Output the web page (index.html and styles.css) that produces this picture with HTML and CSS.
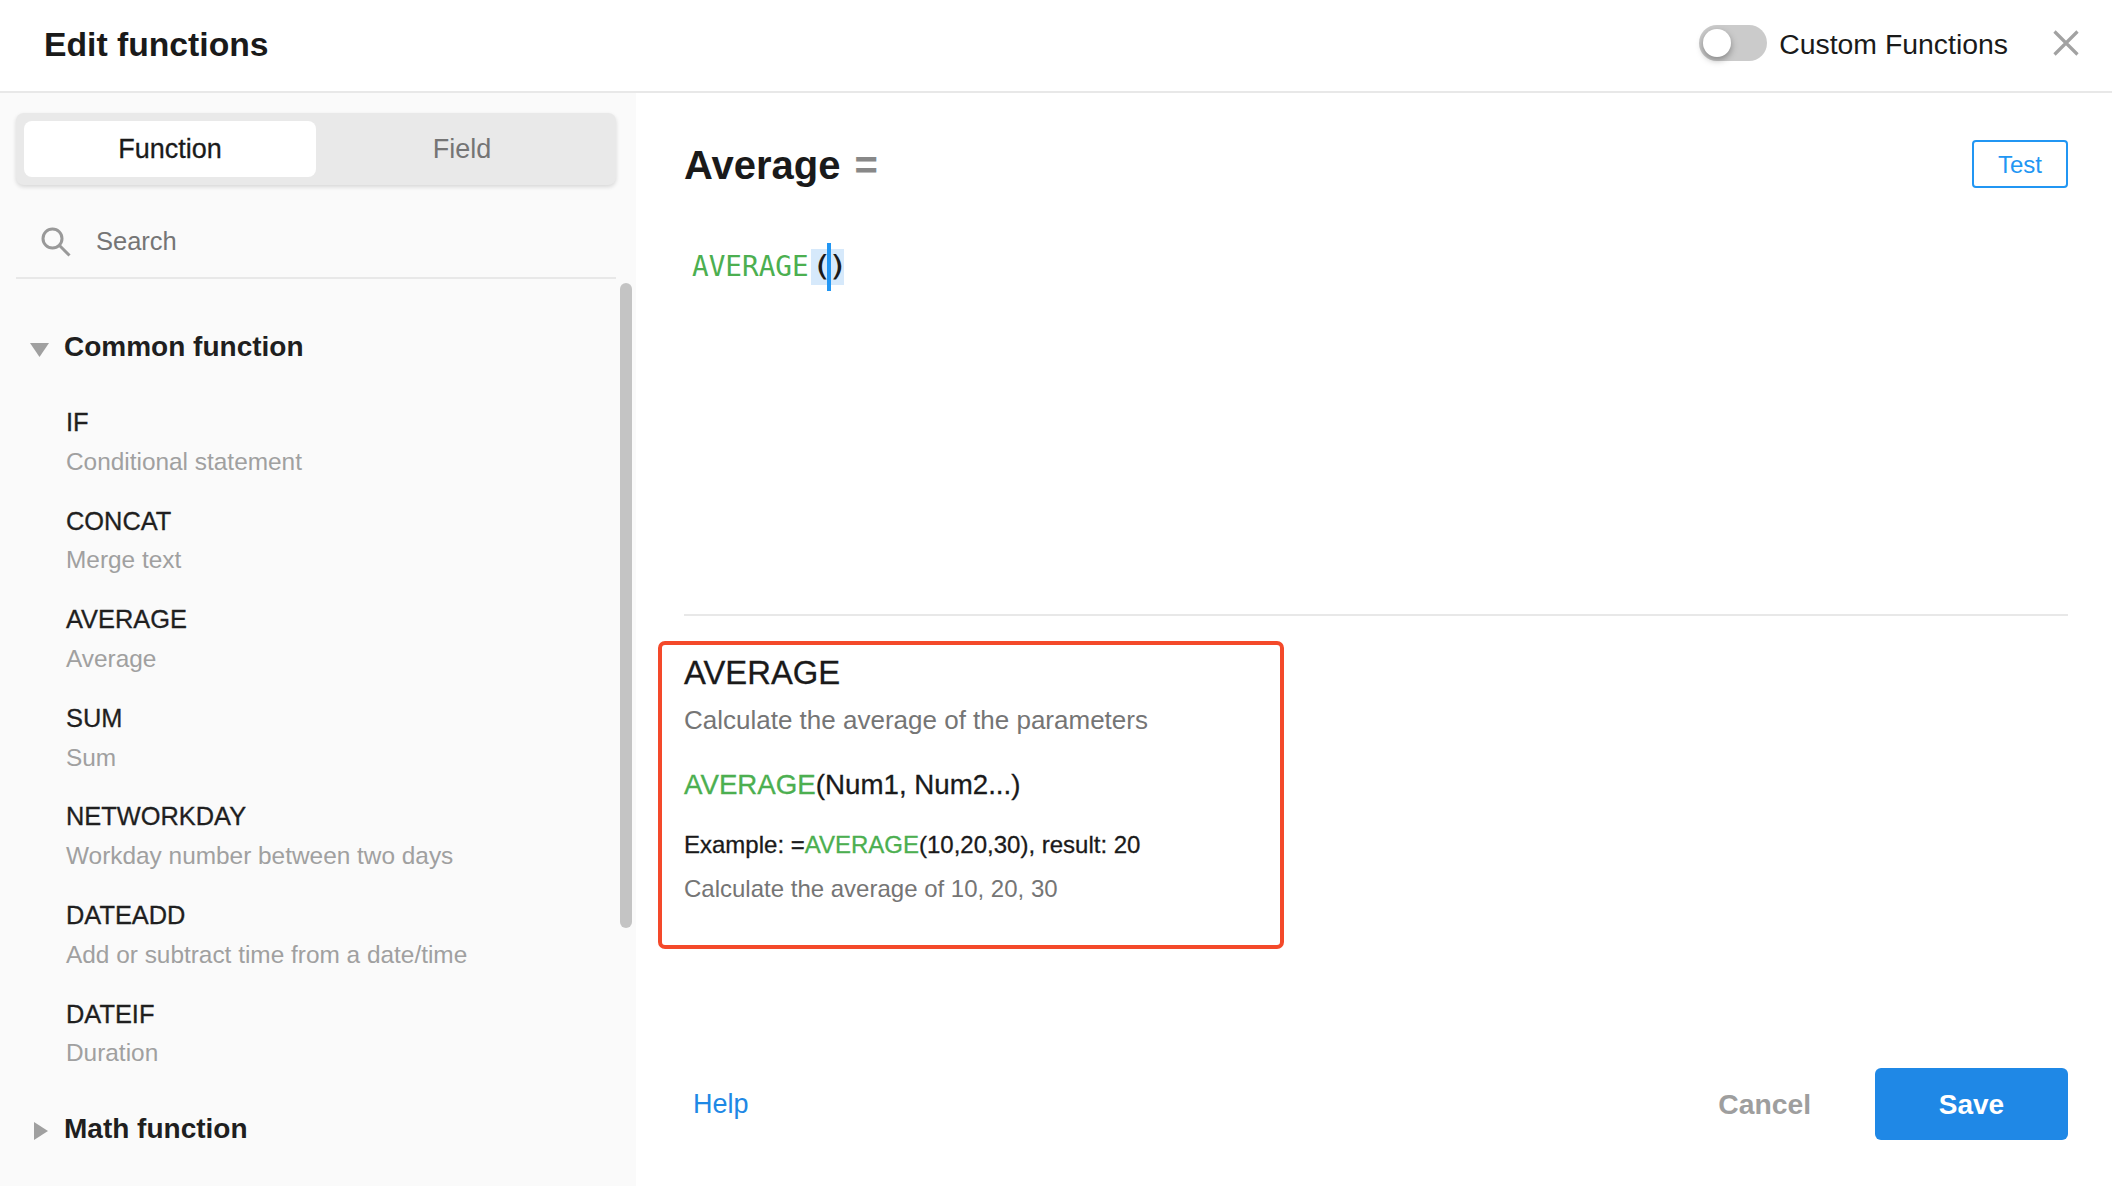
FILE: index.html
```html
<!DOCTYPE html>
<html lang="en">
<head>
<meta charset="utf-8">
<title>Edit functions</title>
<link rel="stylesheet" href="styles.css">
</head>
<body>
<div class="dialog">
  <header class="topbar">
    <h1 class="title">Edit functions</h1>
    <div class="top-actions">
      <span class="toggle"><span class="knob"></span></span>
      <span class="toggle-label">Custom Functions</span>
      <svg class="close" viewBox="0 0 26 26" aria-hidden="true"><path d="M1.5 1.5 24.5 24.5M24.5 1.5 1.5 24.5"/></svg>
    </div>
  </header>
  <div class="body">
    <aside class="sidebar">
      <div class="tabs">
        <div class="tab active">Function</div>
        <div class="tab">Field</div>
      </div>
      <div class="search">
        <svg class="search-icon" viewBox="0 0 30 30" aria-hidden="true"><circle cx="11.5" cy="11.5" r="9.5"/><path d="M18.5 18.5 28.5 28.5"/></svg>
        <span>Search</span>
      </div>
      <div class="scrollbar"></div>
      <div class="group-head first">
        <svg class="caret-down" viewBox="0 0 19 14" aria-hidden="true"><path d="M0 0H19L9.5 14Z"/></svg>
        <span>Common function</span>
      </div>
      <ul class="fn-list">
        <li><div class="fn-name">IF</div><div class="fn-desc">Conditional statement</div></li>
        <li><div class="fn-name">CONCAT</div><div class="fn-desc">Merge text</div></li>
        <li><div class="fn-name">AVERAGE</div><div class="fn-desc">Average</div></li>
        <li><div class="fn-name">SUM</div><div class="fn-desc">Sum</div></li>
        <li><div class="fn-name">NETWORKDAY</div><div class="fn-desc">Workday number between two days</div></li>
        <li><div class="fn-name">DATEADD</div><div class="fn-desc">Add or subtract time from a date/time</div></li>
        <li><div class="fn-name">DATEIF</div><div class="fn-desc">Duration</div></li>
      </ul>
      <div class="group-head">
        <svg class="caret-right" viewBox="0 0 14 18" aria-hidden="true"><path d="M0 0 14 9 0 18Z"/></svg>
        <span>Math function</span>
      </div>
    </aside>
    <main class="content">
      <div class="formula-head">
        <div class="formula-name">Average <span class="equals">=</span></div>
        <button class="test-btn" type="button">Test</button>
      </div>
      <div class="editor"><span class="code-fn">AVERAGE</span><span class="code-parens"><span class="paren">(</span><span class="paren">)</span><span class="cursor"></span></span></div>
      <section class="doc">
        <h2 class="doc-title">AVERAGE</h2>
        <p class="doc-desc">Calculate the average of the parameters</p>
        <p class="doc-syntax"><span class="green">AVERAGE</span>(Num1, Num2...)</p>
        <p class="doc-example">Example: =<span class="green">AVERAGE</span>(10,20,30), result: 20</p>
        <p class="doc-note">Calculate the average of 10, 20, 30</p>
        <div class="highlight-box"></div>
      </section>
      <footer class="footer">
        <a class="help">Help</a>
        <div class="footer-actions">
          <span class="cancel">Cancel</span>
          <button class="save" type="button">Save</button>
        </div>
      </footer>
    </main>
  </div>
</div>
</body>
</html>
```
FILE: styles.css
```css
* { box-sizing: border-box; }
html, body { margin: 0; padding: 0; }
body {
  width: 2112px;
  height: 1186px;
  overflow: hidden;
  background: #fff;
  font-family: "Liberation Sans", Arial, sans-serif;
  color: #1a1a1a;
}
.dialog { display: flex; flex-direction: column; height: 1186px; }
.topbar {
  height: 93px;
  flex: none;
  display: flex;
  align-items: center;
  justify-content: space-between;
  padding: 0 33px 5px 44px;
  border-bottom: 2px solid #e8e8e8;
}
.title { margin: 0; padding-top: 2px; font-size: 33.7px; font-weight: 700; color: #1a1a1a; }
.top-actions { display: flex; align-items: center; }
.toggle {
  position: relative;
  width: 68px;
  height: 36px;
  border-radius: 18px;
  background: #cbcbcb;
  margin-right: 12px;
  display: block;
}
.knob {
  position: absolute;
  left: 4px;
  top: 4px;
  width: 28px;
  height: 28px;
  border-radius: 50%;
  background: #fff;
  box-shadow: 0 3px 7px rgba(0, 0, 0, .35);
}
.toggle-label { padding-top: 2px; font-size: 28.4px; color: #1a1a1a; }
.close { width: 26px; height: 26px; margin-left: 45px; fill: none; stroke: #a2a2a2; stroke-width: 3.2; }
.body { flex: 1; display: flex; min-height: 0; }
.sidebar {
  position: relative;
  width: 636px;
  flex: none;
  background: #fafafa;
  padding: 20px 20px 0 16px;
  overflow: hidden;
}
.tabs {
  display: flex;
  height: 72px;
  padding: 8px;
  border-radius: 8px;
  background: #e9e9e9;
  box-shadow: 0 2px 4px rgba(0, 0, 0, .14);
}
.tab {
  flex: 1;
  display: flex;
  align-items: center;
  justify-content: center;
  padding-top: 1px;
  font-size: 27px;
  color: #757575;
  border-radius: 8px;
}
.tab.active { background: #fff; color: #1a1a1a; -webkit-text-stroke: .3px #1a1a1a; }
.search {
  height: 94px;
  display: flex;
  align-items: center;
  padding: 21px 0 0 25px;
  font-size: 25.5px;
  color: #757575;
  border-bottom: 2px solid #e8e8e8;
}
.search-icon { width: 30px; height: 30px; margin-right: 25px; fill: none; stroke: #999; stroke-width: 3; }
.scrollbar {
  position: absolute;
  left: 620px;
  top: 190px;
  width: 12px;
  height: 645px;
  border-radius: 6px;
  background: #c4c4c4;
}
.group-head {
  display: flex;
  align-items: center;
  height: 40px;
  font-size: 28px;
  font-weight: 700;
  color: #1f1f1f;
}
.group-head.first { margin-top: 48px; }
.caret-down { width: 19px; height: 14px; fill: #a0a0a0; margin: 6px 15px 0 14px; }
.caret-right { width: 14px; height: 18px; fill: #a0a0a0; margin: 3px 16px 0 18px; }
.fn-list { list-style: none; margin: 36px 0 0; padding: 0 0 0 50px; }
.fn-list li { height: 98.6px; }
.fn-name { height: 38.8px; line-height: 39px; font-size: 25.4px; color: #1f1f1f; -webkit-text-stroke: .3px #1f1f1f; }
.fn-desc { line-height: 40px; font-size: 24.4px; color: #a0a0a0; }
.fn-list + .group-head { margin-top: 16px; }
.content {
  flex: 1;
  display: flex;
  flex-direction: column;
  min-width: 0;
  padding: 47px 44px 46px 48px;
  background: #fff;
}
.formula-head { display: flex; align-items: center; justify-content: space-between; height: 48px; }
.formula-name { padding-top: 3px; font-size: 40px; font-weight: 700; color: #1a1a1a; }
.equals { color: #888; margin-left: 3px; }
.test-btn {
  width: 96px;
  height: 48px;
  padding: 2px 0 0;
  background: #fff;
  border: 2px solid #2196f3;
  border-radius: 4px;
  font: 24px "Liberation Sans", Arial, sans-serif;
  color: #2196f3;
}
.editor {
  height: 427.5px;
  padding: 61px 0 0 8px;
  border-bottom: 2px solid #e8e8e8;
  display: block;
  font-family: "DejaVu Sans Mono", monospace;
  font-size: 27.7px;
  line-height: 36px;
}
.code-fn { color: #4caf50; }
.code-parens {
  position: relative;
  display: inline-block;
  margin-left: 2px;
  background: #d6e9fb;
  color: #1a1a1a;
}
.paren {
  display: inline-block;
  margin: 0 1.9px;
  letter-spacing: -3.8px;
  transform: scale(1.3, 1.02);
}
.cursor {
  position: absolute;
  left: 16px;
  top: -6px;
  width: 4px;
  height: 48px;
  background: #2196f3;
}
.doc { position: relative; padding-top: 35px; }
.doc-title { margin: 0; height: 44px; line-height: 44px; font-size: 32.8px; font-weight: 400; color: #1a1a1a; -webkit-text-stroke: .3px #1a1a1a; }
.doc p { margin: 0; }
.doc-desc { margin-top: 6px !important; line-height: 38px; font-size: 26px; color: #757575; }
.doc-syntax { margin-top: 27px !important; line-height: 38px; font-size: 27.7px; color: #1a1a1a; -webkit-text-stroke: .3px; }
.doc-example { margin-top: 23px !important; line-height: 36px; font-size: 24px; color: #1a1a1a; -webkit-text-stroke: .3px; }
.doc-note { margin-top: 8px !important; line-height: 36px; font-size: 24px; color: #757575; }
.green { color: #4caf50; }
.highlight-box {
  position: absolute;
  left: -26px;
  top: 25px;
  width: 626px;
  height: 308px;
  border: 4px solid #f4492a;
  border-radius: 7px;
}
.footer { margin-top: auto; display: flex; align-items: center; justify-content: space-between; height: 72px; padding-left: 9px; }
.help { padding-top: 1px; font-size: 27px; color: #1e88e5; }
.footer-actions { display: flex; align-items: center; }
.cancel { padding-top: 1px; font-size: 28.3px; font-weight: 700; color: #9e9e9e; margin-right: 64px; }
.save {
  width: 193px;
  height: 72px;
  padding: 1px 0 0;
  border: 0;
  border-radius: 6px;
  background: #1f88e6;
  color: #fff;
  font: 700 28px "Liberation Sans", Arial, sans-serif;
}
```
